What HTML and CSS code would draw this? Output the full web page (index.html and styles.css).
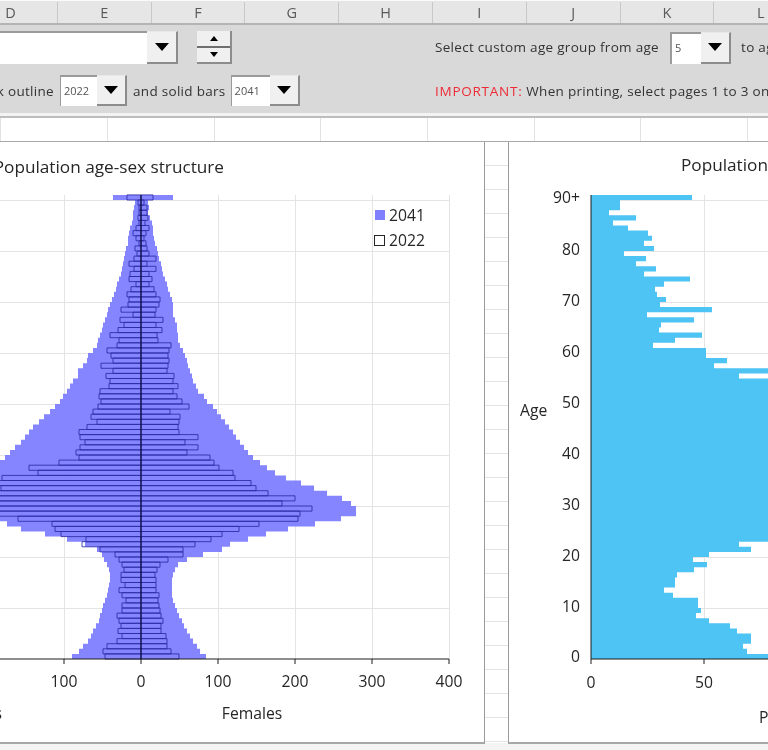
FILE: index.html
```html
<!DOCTYPE html>
<html lang="en">
<head>
<meta charset="utf-8">
<title>Population age-sex structure</title>
<link rel="stylesheet" href="styles.css">
</head>
<body>
<div class="sheet">
  <div class="col-head">
    <div class="col">D</div><div class="col">E</div><div class="col">F</div><div class="col">G</div><div class="col">H</div><div class="col">I</div><div class="col">J</div><div class="col">K</div><div class="col">L</div>
  </div>
  <div class="panel">
    <div class="panel-row panel-row-1">
      <div class="panel-left">
        <div class="combo combo-wide"><span class="combo-field"></span><span class="combo-btn"><i class="arrow"></i></span></div>
        <div class="spin">
          <span class="spin-btn"><i class="spin-up"></i></span>
          <span class="spin-btn"><i class="spin-down"></i></span>
        </div>
      </div>
      <div class="panel-right">
        <span class="label">Select custom age group from age</span>
        <div class="combo combo-age"><span class="combo-field">5</span><span class="combo-btn"><i class="arrow"></i></span></div>
        <span class="label">to age</span>
      </div>
    </div>
    <div class="panel-row panel-row-2">
      <div class="panel-left">
        <div class="clip-label"><span class="label">Show black outline</span></div>
        <div class="combo combo-year"><span class="combo-field">2022</span><span class="combo-btn"><i class="arrow"></i></span></div>
        <span class="label">and solid bars</span>
        <div class="combo combo-year combo-year-wide"><span class="combo-field">2041</span><span class="combo-btn"><i class="arrow"></i></span></div>
      </div>
      <div class="panel-right">
        <span class="label"><span class="important">IMPORTANT:</span> When printing, select pages 1 to 3 only</span>
      </div>
    </div>
  </div>
  <div class="panel-foot"></div>
  <div class="cell-row">
    <div class="cell"></div><div class="cell"></div><div class="cell"></div><div class="cell"></div><div class="cell"></div><div class="cell"></div><div class="cell"></div><div class="cell"></div>
  </div>
  <div class="charts">
    <div class="card card-left">
      <svg class="chart" width="484" height="600" viewBox="0 142 484 600">
        <text class="t-title" x="224" y="173" text-anchor="end">Population age-sex structure</text>
        <g id="grid-left" class="grid"></g>
        <path id="solid" class="solid"></path>
        <path id="outline" class="outline"></path>
        <line class="axis-mid" x1="141" y1="195" x2="141" y2="659"></line>
        <line class="axis" x1="0" y1="659" x2="449" y2="659"></line>
        <g id="ticks-left" class="axis"></g>
        <text class="t-axis" x="-13" y="687" text-anchor="middle">200</text>
        <text class="t-axis" x="64" y="687" text-anchor="middle">100</text>
        <text class="t-axis" x="141" y="687" text-anchor="middle">0</text>
        <text class="t-axis" x="218" y="687" text-anchor="middle">100</text>
        <text class="t-axis" x="295" y="687" text-anchor="middle">200</text>
        <text class="t-axis" x="372" y="687" text-anchor="middle">300</text>
        <text class="t-axis" x="449" y="687" text-anchor="middle">400</text>
        <text class="t-axis" x="2" y="719" text-anchor="end">Males</text>
        <text class="t-axis" x="252" y="719" text-anchor="middle">Females</text>
        <rect class="key-solid" x="375" y="210" width="10" height="10"></rect>
        <text class="t-axis" x="389" y="221">2041</text>
        <rect class="key-outline" x="374.500" y="235.500" width="10" height="10"></rect>
        <text class="t-axis" x="389" y="246">2022</text>
      </svg>
    </div>
    <div class="gap"></div>
    <div class="card card-right">
      <svg class="chart" width="259" height="600" viewBox="509 142 259 600">
        <text class="t-title" x="681" y="171">Population pyramid</text>
        <g id="grid-right" class="grid"></g>
        <path id="bars" class="bars"></path>
        <line class="axis" x1="591" y1="195" x2="591" y2="664"></line>
        <line class="axis" x1="591" y1="659" x2="768" y2="659"></line>
        <line class="axis" x1="704" y1="659" x2="704" y2="664"></line>
        <text class="t-axis" x="580" y="203" text-anchor="end">90+</text>
        <text class="t-axis" x="580" y="255" text-anchor="end">80</text>
        <text class="t-axis" x="580" y="306" text-anchor="end">70</text>
        <text class="t-axis" x="580" y="357" text-anchor="end">60</text>
        <text class="t-axis" x="580" y="408" text-anchor="end">50</text>
        <text class="t-axis" x="580" y="459" text-anchor="end">40</text>
        <text class="t-axis" x="580" y="510" text-anchor="end">30</text>
        <text class="t-axis" x="580" y="561" text-anchor="end">20</text>
        <text class="t-axis" x="580" y="612" text-anchor="end">10</text>
        <text class="t-axis" x="580" y="662" text-anchor="end">0</text>
        <text class="t-axis" x="520" y="416">Age</text>
        <text class="t-axis" x="591" y="688" text-anchor="middle">0</text>
        <text class="t-axis" x="704" y="688" text-anchor="middle">50</text>
        <text class="t-axis" x="759" y="723">Persons</text>
      </svg>
    </div>
  </div>
</div>
<script src="chart.js"></script>
</body>
</html>
```

FILE: styles.css
```css
* { box-sizing: border-box; }
html, body { margin: 0; padding: 0; background: #fff; }
body { width: 768px; height: 750px; overflow: hidden; font-family: "Open Sans", "Liberation Sans", sans-serif; }
.sheet { width: 768px; height: 750px; overflow: hidden; display: flex; flex-direction: column; filter: blur(0.45px); background: #f4f4f4; }

.col-head { display: flex; height: 25px; flex: none; margin-left: -36px; padding-top: 1px; background: #e6e6e6; border-bottom: 2px solid #b4b4b4; border-top: 1px solid #fafafa; }
.col { flex: none; width: 93.800px; text-align: center; font-size: 14.500px; line-height: 21px; color: #5a5a5a; border-right: 1px solid #c8c8c8; }

.panel { flex: none; height: 88px; padding-top: 6px; background: #d9d9d9; display: flex; flex-direction: column; gap: 11px; }
.panel-row { display: flex; height: 33px; }
.panel-row-1 .label { margin-bottom: 2px; }
.panel-row-2 { height: 31px; }
.panel-left { flex: none; width: 435px; display: flex; align-items: center; }
.panel-right { flex: none; width: 400px; display: flex; align-items: center; }
.label { font-size: 13.500px; color: #333; white-space: nowrap; letter-spacing: 0.300px; }
.important { color: #ee2a35; letter-spacing: 0.750px; }
.clip-label { flex: none; width: 60px; padding-right: 6px; display: flex; justify-content: flex-end; overflow: hidden; }

.combo { flex: none; display: flex; height: 100%; }
.combo-field { flex: 1; background: #fff; border-top: 2px solid #9a9a9a; font-size: 11px; line-height: 28px; padding-left: 3px; color: #555; }
.combo-btn { flex: none; display: flex; align-items: center; justify-content: center; background: #f0f0f0; border-top: 1px solid #e8e8e8; border-right: 2px solid #8c8c8c; border-bottom: 2px solid #8c8c8c; }
.arrow { display: block; width: 0; height: 0; border-left: 7px solid transparent; border-right: 7px solid transparent; border-top: 8px solid #000; }
.combo-wide { width: 178px; }
.combo-wide .combo-btn { width: 31px; }
.combo-age { width: 61px; margin-left: 11px; margin-right: 10px; height: 32px; }
.combo-age .combo-btn { width: 30px; }
.combo-age .combo-field { border-left: 2px solid #9a9a9a; }
.combo-year { width: 67px; }
.combo-year-wide { width: 69px; }
.combo-year .combo-field { border-left: 1px solid #9a9a9a; }
.combo-year .combo-btn { width: 30px; }
.combo-year + .label { margin: 0 5px 0 6px; }

.spin { flex: none; width: 35px; height: 33px; margin-left: 19px; display: flex; flex-direction: column; background: #f0f0f0; border-right: 2px solid #8c8c8c; border-bottom: 2px solid #8c8c8c; }
.spin-btn { flex: 1; display: flex; align-items: center; justify-content: center; }
.spin-btn + .spin-btn { border-top: 2px solid #6e6e6e; }
.spin-up { display: block; width: 0; height: 0; border-left: 4px solid transparent; border-right: 4px solid transparent; border-bottom: 5px solid #000; }
.spin-down { display: block; width: 0; height: 0; border-left: 4px solid transparent; border-right: 4px solid transparent; border-top: 5px solid #000; }

.panel-foot { flex: none; height: 5px; background: #f3f3f3; border-bottom: 2px solid #bdbdbd; }
.cell-row { flex: none; height: 24px; display: flex; margin-left: -105.500px; background: #fff; border-bottom: 1px solid #a8a8a8; }
.cell { flex: none; width: 106.700px; border-right: 1px solid #e2e2e2; }

.charts { flex: none; height: 602px; display: flex; }
.card { flex: none; height: 602px; background: #fff; border-bottom: 2px solid #a8a8a8; }
.card-left { width: 485px; border-right: 1px solid #9a9a9a; }
.card-right { width: 260px; border-left: 1px solid #9a9a9a; }
.gap { flex: none; width: 23px; height: 601px; background: repeating-linear-gradient(to bottom, #fff 0 23px, #e4e4e4 23px 24px); }
.chart { display: block; font-family: "Open Sans", "Liberation Sans", sans-serif; }

.t-title { font-size: 17.200px; fill: #262626; }
.t-axis { font-size: 15.700px; fill: #262626; }
.grid line { stroke: #e4e4e4; stroke-width: 1; }
.solid { fill: #8080ff; fill-opacity: 0.96; }
.outline { fill: none; stroke: #2c2ca6; stroke-opacity: 0.85; stroke-width: 1; }
.bars { fill: #47c2f4; fill-opacity: 0.97; }
.axis, .axis line { stroke: #1c1c1c; stroke-width: 1; }
.axis-mid { stroke: #101050; stroke-width: 1.500; }
.key-solid { fill: #8080ff; }
.key-outline { fill: #fff; stroke: #262626; stroke-width: 1; }
```

FILE: chart.js
```js
var solidL = [69,62,58,53,50,48,45,42,41,39,38,36,34,33,32,31,31,32,34,37,
  39,44,56,74,96,120,134,160,175,190,200,205,205,200,190,180,170,160,150,136,
  131,126,120,116,112,108,102,97,91,86,81,78,74,71,68,63,63,58,54,53,
  48,44,43,41,39,38,36,34,33,31,29,27,25,24,22,20,19,18,17,16,
  15,13,13,12,11,9,8,8,7,6,28];
var solidR = [65,59,56,52,49,46,43,41,38,36,34,32,31,31,31,31,32,34,37,46,
  62,81,89,107,125,147,174,200,215,215,210,201,186,173,160,145,134,126,119,112,
  107,103,99,95,92,88,84,80,76,72,66,63,57,55,52,51,49,47,46,44,
  42,39,37,37,36,36,34,32,32,32,31,29,27,26,24,22,21,20,18,17,
  16,14,13,12,12,11,9,7,8,7,32];
var outL = [36,38,34,24,19,23,20,22,24,19,19,15,19,22,16,20,20,17,19,22,
  26,41,59,55,80,86,89,123,150,158,165,170,160,140,145,139,103,112,82,62,
  65,61,56,61,62,54,44,50,48,43,40,42,41,32,31,35,28,40,28,30,
  34,24,22,31,23,17,21,8,20,13,12,14,10,5,12,11,7,12,7,4,
  6,2,5,8,5,2,3,2,2,3,14];
var outR = [38,30,26,26,25,20,20,22,20,19,18,17,18,15,15,15,14,16,19,27,
  42,42,54,70,81,98,118,157,159,171,141,154,127,115,110,94,92,78,73,69,
  46,57,44,57,38,37,38,39,29,48,41,36,32,37,32,33,26,27,28,27,
  28,30,17,16,21,15,22,14,15,18,19,15,13,8,11,8,15,6,15,8,
  6,5,3,5,8,4,7,6,6,3,12];
var bars = [300,156,152,160,160,146,139,118,105,110,107,107,82,73,84,84,86,103,116,102,
  118,160,148,300,300,300,300,300,300,300,300,300,300,300,300,300,300,300,300,300,
  300,300,300,300,300,300,300,300,300,300,300,300,300,300,300,148,300,123,136,115,
  115,62,84,111,68,70,103,56,121,69,75,66,64,73,99,53,65,45,55,33,
  63,53,61,57,37,22,45,18,29,29,101];

var AXIS_Y = 659;
var ROW_H = 5.1;
var SVG_NS = 'http://www.w3.org/2000/svg';

function rowTop(age) {
  return AXIS_Y - (age + 1) * ROW_H;
}

function barPath(left, right) {
  var d = '';
  for (var age = 0; age < left.length; age++) {
    var top = rowTop(age).toFixed(2);
    d += 'M' + left[age] + ' ' + top + 'H' + right[age] + 'V' + (rowTop(age) + ROW_H).toFixed(2) + 'H' + left[age] + 'Z';
  }
  return d;
}

function addLine(parent, x1, y1, x2, y2) {
  var line = document.createElementNS(SVG_NS, 'line');
  line.setAttribute('x1', x1);
  line.setAttribute('y1', y1);
  line.setAttribute('x2', x2);
  line.setAttribute('y2', y2);
  parent.appendChild(line);
}

function offset(values, centre, sign) {
  return values.map(function (v) { return centre + sign * v; });
}

var CENTRE = 141;
document.getElementById('solid').setAttribute('d', barPath(offset(solidL, CENTRE, -1), offset(solidR, CENTRE, 1)));
document.getElementById('outline').setAttribute('d', barPath(offset(outL, CENTRE, -1), offset(outR, CENTRE, 1)));
document.getElementById('bars').setAttribute('d', barPath(bars.map(function () { return 591; }), offset(bars, 591, 1)));

var gridLeft = document.getElementById('grid-left');
var gridRight = document.getElementById('grid-right');
for (var i = 1; i <= 9; i++) {
  var y = AXIS_Y - i * 51 + 0.5;
  addLine(gridLeft, 0, y, 449, y);
  addLine(gridRight, 591, y, 768, y);
}
[64, 218, 295, 372, 449].forEach(function (x) { addLine(gridLeft, x + 0.5, 195, x + 0.5, 659); });
addLine(gridRight, 704.5, 195, 704.5, 659);

var ticksLeft = document.getElementById('ticks-left');
[64, 141, 218, 295, 372, 449].forEach(function (x) { addLine(ticksLeft, x, 659, x, 664); });
```
